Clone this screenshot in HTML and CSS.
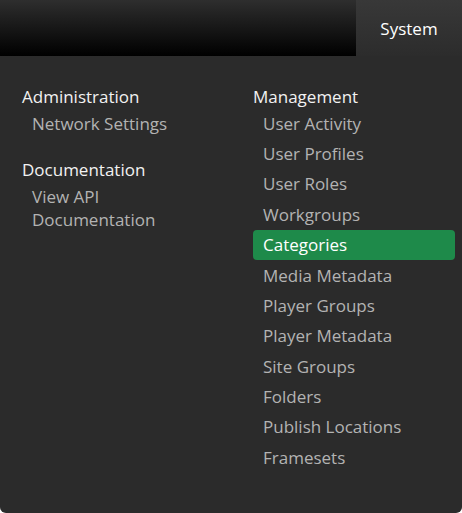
FILE: index.html
```html
<!DOCTYPE html>
<html lang="en">
<head>
    <meta charset="UTF-8">
    <meta name="viewport" content="width=device-width, initial-scale=1.0">
    <title>System</title>
    <link rel="stylesheet" href="styles.css">
</head>
<body>
    <div class="topbar">
        <div class="tab">System</div>
    </div>

    <div class="menu">
        <div class="column">
            <div class="group">
                <h3>Administration</h3>
                <a class="item" href="#">Network Settings</a>
            </div>
            <div class="group">
                <h3>Documentation</h3>
                <a class="item" href="#">View API Documentation</a>
            </div>
        </div>
        <div class="column">
            <div class="group">
                <h3>Management</h3>
                <a class="item" href="#">User Activity</a>
                <a class="item" href="#">User Profiles</a>
                <a class="item" href="#">User Roles</a>
                <a class="item" href="#">Workgroups</a>
                <a class="item active" href="#">Categories</a>
                <a class="item" href="#">Media Metadata</a>
                <a class="item" href="#">Player Groups</a>
                <a class="item" href="#">Player Metadata</a>
                <a class="item" href="#">Site Groups</a>
                <a class="item" href="#">Folders</a>
                <a class="item" href="#">Publish Locations</a>
                <a class="item" href="#">Framesets</a>
            </div>
        </div>
    </div>
</body>
</html>
```

FILE: styles.css
```css
body {
    margin: 0;
    background-color: #fff;
    font-family: "Open Sans", "Noto Sans", sans-serif;
    font-size: 17px;
}
.topbar {
    height: 56px;
    display: flex;
    justify-content: flex-end;
    background: linear-gradient(to bottom, #2e2e2e, #000);
}
.tab {
    width: 106px;
    display: flex;
    align-items: center;
    justify-content: center;
    color: #fff;
    background: linear-gradient(to bottom, #383838, #2c2c2c);
}
.menu {
    height: 457px;
    box-sizing: border-box;
    display: grid;
    grid-template-columns: 202px 202px;
    column-gap: 29px;
    padding: 29px 7px 0 22px;
    background-color: #2b2b2b;
    border-radius: 0 0 6px 6px;
}
.group {
    display: flex;
    flex-direction: column;
    margin-bottom: 20px;
}
.group h3 {
    margin: 0;
    font-size: 17px;
    font-weight: normal;
    line-height: 23px;
    color: #f2f2f2;
}
.item {
    display: block;
    padding: 3.7px 10px;
    line-height: 23px;
    color: #b3b3b3;
    text-decoration: none;
    border-radius: 4px;
}
.item.active {
    background-color: #1e8a4a;
    color: #fff;
}
```
